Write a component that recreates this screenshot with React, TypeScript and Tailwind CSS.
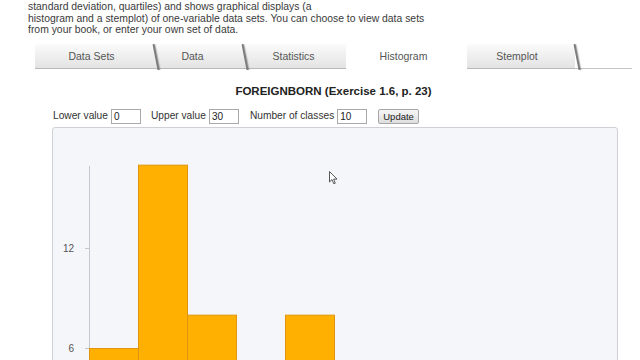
const tabs = [
  { label: 'Data Sets', w: 119, pr: 'pr-[6px]' },
  { label: 'Data', w: 89, pr: 'pr-[12px]' },
  { label: 'Statistics', w: 103, pr: 'pr-[2px]' },
  { label: 'Histogram', w: 121, pr: 'pr-[6px]', active: true },
  { label: 'Stemplot', w: 108, pr: 'pr-[8px]' },
]

// frequencies per class; bar scale: 1 unit = 100/6 px
const bars = [6, 17, 8, 0, 8]

function Histogram() {
  const base = 320
  const unit = 100 / 6
  return (
    <svg width="566" height="240" className="block">
      <line x1="36.5" y1="38" x2="36.5" y2="240" stroke="#c4c7cf" strokeWidth="1" />
      {[12, 6].map((v) => {
        const y = base - v * unit + 0.5
        return (
          <g key={v}>
            <line x1="32" y1={y} x2="37" y2={y} stroke="#c4c7cf" />
            <text
              x="21"
              y={y + 3.5}
              textAnchor="end"
              fontSize="10"
              fill="#555"
              fontFamily="Liberation Sans, Arial, sans-serif"
            >
              {v}
            </text>
          </g>
        )
      })}
      {bars.map((v, i) =>
        v > 0 ? (
          <rect
            key={i}
            x={36.5 + i * 49}
            y={base - v * unit + 0.5}
            width="49"
            height={v * unit}
            fill="#ffb000"
            stroke="#e2950a"
            strokeWidth="1"
          />
        ) : null,
      )}
    </svg>
  )
}

function Input({ value }: { value: string }) {
  return (
    <span className="mx-[3px] inline-flex h-[15px] w-[30px] items-center border border-[#a9a9a9] bg-white pl-[2px] text-[10px] text-[#222]">
      {value}
    </span>
  )
}

export default function App() {
  return (
    <div
      className="relative h-[360px] w-[640px] overflow-hidden bg-white text-[#333]"
      style={{ fontFamily: '"Liberation Sans", Arial, sans-serif' }}
    >
      {/* Intro text, first line clipped by the viewport */}
      <p className="mt-[1px] pl-[28px] text-[10.4px] leading-[11.5px] text-[#3a3a3a]">
        standard deviation, quartiles) and shows graphical displays (a
        <br />
        histogram and a stemplot) of one-variable data sets. You can choose to view data sets
        <br />
        from your book, or enter your own set of data.
      </p>

      <div className="ml-[35px] w-[597px]">
        {/* Tabs */}
        <div className="mt-[8px] flex h-[25px]">
          {tabs.map((t) => (
            <div
              key={t.label}
              style={{ width: t.w }}
              className={
                t.active
                  ? `relative flex items-center justify-center bg-white pt-[2px] text-[10.5px] text-[#555] ${t.pr}`
                  : `relative flex items-center justify-center rounded-tl-[3px] border-b border-[#b9b9b9] bg-gradient-to-b from-[#fbfbfb] to-[#e3e3e3] pt-[2px] text-[10.5px] text-[#555] ${t.pr}`
              }
            >
              {t.label}
              {!t.active && t.label !== 'Statistics' && (
                <span className="absolute -right-[2px] top-0 z-10 h-[26px] w-[1.5px] skew-x-[11deg] rounded-t-[2px] bg-[#7c7c7c] shadow-[1px_0_1px_rgba(0,0,0,0.25)]" />
              )}
            </div>
          ))}
          <div className="flex-1 border-b border-[#c4c4c4]" />
        </div>

        {/* Title */}
        <h1 className="mt-[15px] text-center text-[11.5px] font-bold leading-[14px] text-[#222]">
          FOREIGNBORN (Exercise 1.6, p. 23)
        </h1>

        {/* Controls */}
        <div className="ml-[18px] mt-[11px] flex h-[15px] items-center text-[10.2px] text-[#333]">
          <span>Lower value</span>
          <Input value="0" />
          <span className="ml-[7px]">Upper value</span>
          <Input value="30" />
          <span className="ml-[8px]">Number of classes</span>
          <Input value="10" />
          <button className="ml-[8px] h-[15px] rounded-[2px] border border-[#a6a6a6] bg-gradient-to-b from-[#f6f6f6] to-[#dedede] px-[4px] text-[9.5px] leading-[13px] text-[#222]">
            Update
          </button>
        </div>

        {/* Chart panel */}
        <div className="ml-[17px] mt-[3px] h-[260px] w-[566px] rounded-[3px] border border-[#cfd1d6] bg-[#f5f6f9]">
          <Histogram />
        </div>
      </div>

      {/* Mouse cursor */}
      <svg className="absolute left-[329px] top-[171px]" width="9" height="14" viewBox="0 0 9 14">
        <path d="M0.5 0.5 L0.5 11 L3 8.6 L4.8 12.8 L6.3 12.1 L4.6 8.1 L8 8.1 Z" fill="#fff" stroke="#444" strokeWidth="0.9" />
      </svg>
    </div>
  )
}
